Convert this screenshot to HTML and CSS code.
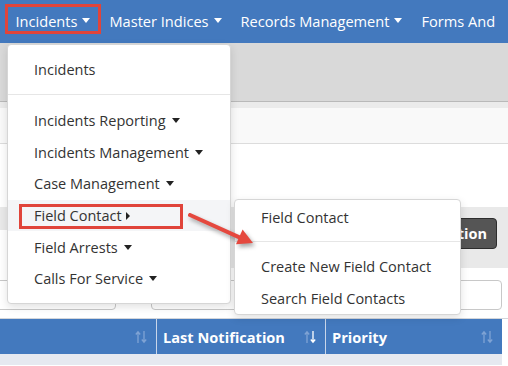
FILE: index.html
```html
<!DOCTYPE html>
<html lang="en">
<head>
    <meta charset="UTF-8">
    <title>Incidents - Field Contact</title>
    <link rel="stylesheet" href="styles.css">
</head>
<body>
    <nav class="navbar">
        <a class="nav-link">Incidents<span class="caret"></span></a>
        <a class="nav-link">Master Indices<span class="caret"></span></a>
        <a class="nav-link">Records Management<span class="caret"></span></a>
        <a class="nav-link">Forms And</a>
    </nav>
    <div class="subheader"></div>
    <div class="strip"></div>
    <div class="toolbar"></div>
    <div class="spacer"></div>
    <div class="panel-row">
        <div class="panel-left"></div>
        <div class="panel-right">
            <button class="btn-dark">Notification</button>
        </div>
    </div>
    <div class="filters">
        <div class="input input-short"></div>
        <div class="input input-long"></div>
    </div>
    <div class="grid-head">
        <div class="th th-first"><span></span><svg class="sort" width="12" height="14" viewBox="0 0 12 14"><path d="M3 13V2M0.8 4.5L3 1.8 5.2 4.5" stroke="#7fa3d4" stroke-width="1.3" fill="none"/><path d="M9 1v11M6.8 9.5L9 12.2 11.2 9.5" stroke="#7fa3d4" stroke-width="1.3" fill="none"/></svg></div>
        <div class="th th-second"><span>Last Notification</span><svg class="sort" width="12" height="14" viewBox="0 0 12 14"><path d="M3 13V2M0.8 4.5L3 1.8 5.2 4.5" stroke="#7fa3d4" stroke-width="1.3" fill="none"/><path d="M9 1v11M6.8 9.5L9 12.2 11.2 9.5" stroke="#ffffff" stroke-width="1.3" fill="none"/></svg></div>
        <div class="th th-third"><span>Priority</span><svg class="sort" width="12" height="14" viewBox="0 0 12 14"><path d="M3 13V2M0.8 4.5L3 1.8 5.2 4.5" stroke="#7fa3d4" stroke-width="1.3" fill="none"/><path d="M9 1v11M6.8 9.5L9 12.2 11.2 9.5" stroke="#7fa3d4" stroke-width="1.3" fill="none"/></svg></div>
    </div>
    <div class="grid-row"></div>

    <!-- open menus -->
    <div class="dropdown">
        <div class="dd-item">Incidents</div>
        <div class="dd-divider"></div>
        <div class="dd-item">Incidents Reporting<span class="caret dark"></span></div>
        <div class="dd-item">Incidents Management<span class="caret dark"></span></div>
        <div class="dd-item">Case Management<span class="caret dark"></span></div>
        <div class="dd-item active">Field Contact<span class="caret-right"></span></div>
        <div class="dd-item">Field Arrests<span class="caret dark"></span></div>
        <div class="dd-item">Calls For Service<span class="caret dark"></span></div>
    </div>
    <div class="submenu">
        <div class="dd-item first">Field Contact</div>
        <div class="dd-divider sub"></div>
        <div class="dd-item">Create New Field Contact</div>
        <div class="dd-item">Search Field Contacts</div>
    </div>

    <!-- annotations -->
    <div class="mark mark-nav"></div>
    <div class="mark mark-item"></div>
    <svg class="arrow" width="508" height="366" viewBox="0 0 508 366">
        <g class="arrow-shape">
            <line x1="190" y1="215" x2="240" y2="237.6" stroke="#e5483e" stroke-width="4" stroke-linecap="round"/>
            <polygon points="253,243 236,244.2 242.6,229.6" fill="#e5483e"/>
        </g>
    </svg>
</body>
</html>
```

FILE: styles.css
```css
body {
    margin: 0;
    font-family: "Open Sans", "Noto Sans", sans-serif;
    background: #fff;
    position: relative;
    width: 508px;
    height: 366px;
    overflow: hidden;
}

/* top nav */
.navbar {
    height: 43px;
    background-color: #4379be;
    display: flex;
    align-items: center;
    padding-left: 6px;
    white-space: nowrap;
}
.nav-link {
    color: #fff;
    font-size: 14.6px;
    padding: 0 9.5px;
    display: flex;
    align-items: center;
    margin-top: -2px;
}
.caret {
    display: inline-block;
    width: 0;
    height: 0;
    margin-left: 5px;
    border-top: 5px solid #fff;
    border-left: 4px solid transparent;
    border-right: 4px solid transparent;
}
.caret.dark {
    border-top-color: #222;
    margin-left: 6px;
}
.caret-right {
    display: inline-block;
    width: 0;
    height: 0;
    margin-left: 4px;
    border-left: 4px solid #222;
    border-top: 4px solid transparent;
    border-bottom: 4px solid transparent;
}

/* page behind the menu */
.subheader {
    height: 58px;
    background: #d9d9d9;
    border-bottom: 1px solid #b9b9b9;
}
.strip {
    height: 6px;
    background: #ebebeb;
}
.toolbar {
    height: 35px;
    background: #f9f9f9;
    border-bottom: 1px solid #dcdcdc;
}
.spacer {
    height: 63px;
}
.panel-row {
    display: flex;
    align-items: flex-start;
}
.panel-left {
    width: 230px;
    height: 23px;
    background: #e9e9e9;
}
.panel-right {
    flex: 1;
    height: 61px;
    background: #e9e9e9;
    display: flex;
    align-items: center;
    justify-content: flex-end;
    padding-right: 11px;
}
.btn-dark {
    background: #555;
    color: #fff;
    border: 1px solid #2d2d2d;
    border-radius: 4px;
    font-family: inherit;
    font-weight: bold;
    font-size: 14.5px;
    height: 31px;
    padding: 0 9px;
    margin-top: -8px;
}
.filters {
    display: flex;
    padding-top: 12px;
    box-sizing: border-box;
    border-bottom: 1px solid #d3d6db;
    height: 51px;
}
.input {
    height: 30px;
    box-sizing: border-box;
    border: 1px solid #c8c8c8;
    border-radius: 4px;
    background: #fff;
}
.input-short {
    width: 124px;
    margin-left: -8px;
}
.input-long {
    width: 351px;
    margin-left: 35px;
}
.grid-head {
    display: flex;
    width: 502px;
    height: 35px;
    background: #4379be;
}
.th {
    display: flex;
    align-items: center;
    justify-content: space-between;
    color: #fff;
    font-weight: bold;
    font-size: 14.6px;
    padding: 0 9px 0 6px;
    box-sizing: border-box;
    border-right: 1px solid #c9d6ea;
}
.th-first { width: 157px; }
.th-second { width: 169px; }
.th-third { width: 176px; border-right: none; }
.grid-row {
    width: 502px;
    height: 11px;
    background: #e6e9f0;
}

/* dropdown menus */
.dropdown {
    position: absolute;
    left: 7px;
    top: 44px;
    width: 222px;
    background: #fff;
    border: 1px solid #d6d6d6;
    border-radius: 4px;
    box-shadow: 0 3px 8px rgba(0, 0, 0, 0.12);
    padding: 9px 0 8px;
}
.dd-item {
    height: 31.7px;
    padding-left: 26px;
    font-size: 14.5px;
    color: #333;
    display: flex;
    align-items: center;
    white-space: nowrap;
}
.dd-item.active {
    background: #f4f5f7;
}
.dd-divider {
    height: 1px;
    background: #e6e6e6;
    margin: 8px 0 10px;
}
.submenu {
    position: absolute;
    left: 234px;
    top: 199px;
    width: 225px;
    background: #fff;
    border: 1px solid #d6d6d6;
    border-radius: 4px;
    box-shadow: 0 3px 8px rgba(0, 0, 0, 0.12);
    padding: 2px 0 0;
}
.dd-divider.sub {
    margin: 7px 0 9px;
}

/* screenshot annotations */
.mark {
    position: absolute;
    border: 3px solid #e0443a;
    box-sizing: border-box;
}
.mark-nav {
    left: 5px;
    top: 4px;
    width: 96px;
    height: 30px;
}
.mark-item {
    left: 19px;
    top: 204px;
    width: 164px;
    height: 25px;
}
.arrow {
    position: absolute;
    left: 0;
    top: 0;
    pointer-events: none;
}
.arrow-shape {
    filter: drop-shadow(2px 3px 2px rgba(0, 0, 0, 0.35));
}
```
